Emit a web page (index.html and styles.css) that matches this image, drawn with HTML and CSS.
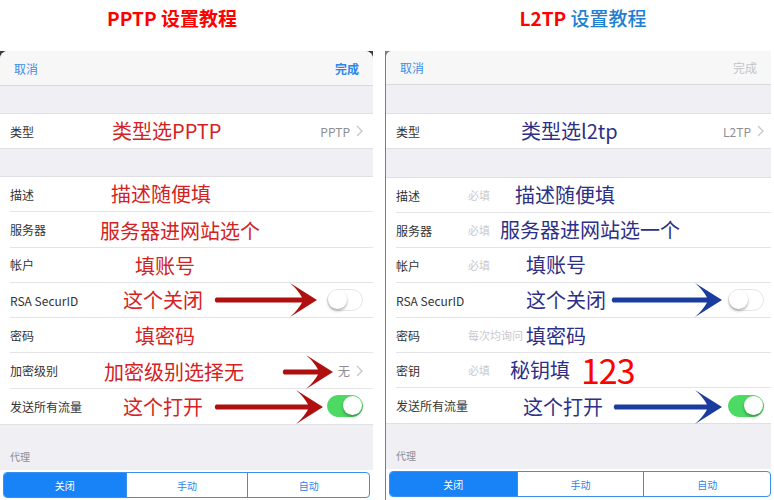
FILE: index.html
```html
<!DOCTYPE html>
<html lang="zh-CN">
<head>
    <meta charset="UTF-8">
    <meta name="viewport" content="width=device-width, initial-scale=1.0">
    <title>PPTP / L2TP 设置教程</title>
    <link rel="stylesheet" href="styles.css">
</head>
<body>

<div class="page">

    <!-- Colonne 1 : PPTP -->
    <div class="column column-pptp">
        <h1 class="title"><span class="red">PPTP 设置教程</span></h1>
        <div class="bezel">
        <div class="screen">
            <div class="nav">
                <span>取消</span>
                <span class="done">完成</span>
            </div>
            <div class="gap"></div>
            <div class="list list-type">
                <div class="row">
                    <span class="label">类型</span>
                    <div class="note note-type"><span>类型选PPTP</span></div>
                    <span class="value">PPTP</span>
                    <svg class="chev" width="7" height="12" viewBox="0 0 7 12"><polyline points="1,1 6,6 1,11" fill="none" stroke="#c7c7cc" stroke-width="1.3"/></svg>
                </div>
            </div>
            <div class="gap gap-low"></div>
            <div class="list list-fields">
                <div class="row">
                    <span class="label">描述</span>
                    <div class="note note-desc"><span>描述随便填</span></div>
                </div>
                <div class="row">
                    <span class="label">服务器</span>
                    <div class="note note-server"><span>服务器进网站选个</span></div>
                </div>
                <div class="row">
                    <span class="label">帐户</span>
                    <div class="note note-account"><span>填账号</span></div>
                </div>
                <div class="row">
                    <span class="label">RSA SecurID</span>
                    <div class="note note-rsa">
                        <span>这个关闭</span>
                        <svg class="arrow arrow-rsa" width="104" height="36" viewBox="0 0 104 36"><path d="M3 15.5 L89 15.5 Q85 8 77 1 L104 18 L77 35 Q85 28 89 20.5 L3 20.5 Q0.5 18 3 15.5 Z"/></svg>
                    </div>
                    <span class="switch"></span>
                </div>
                <div class="row">
                    <span class="label">密码</span>
                    <div class="note note-password"><span>填密码</span></div>
                </div>
                <div class="row">
                    <span class="label">加密级别</span>
                    <div class="note note-level">
                        <span>加密级别选择无</span>
                        <svg class="arrow arrow-level" width="52" height="36" viewBox="0 0 52 36"><path d="M3 15.5 L37 15.5 Q33 8 25 1 L52 18 L25 35 Q33 28 37 20.5 L3 20.5 Q0.5 18 3 15.5 Z"/></svg>
                    </div>
                    <span class="value">无</span>
                    <svg class="chev" width="7" height="12" viewBox="0 0 7 12"><polyline points="1,1 6,6 1,11" fill="none" stroke="#c7c7cc" stroke-width="1.3"/></svg>
                </div>
                <div class="row">
                    <span class="label">发送所有流量</span>
                    <div class="note note-send">
                        <span>这个打开</span>
                        <svg class="arrow arrow-send" width="110" height="36" viewBox="0 0 110 36"><path d="M3 15.5 L95 15.5 Q91 8 83 1 L110 18 L83 35 Q91 28 95 20.5 L3 20.5 Q0.5 18 3 15.5 Z"/></svg>
                    </div>
                    <span class="switch on"></span>
                </div>
            </div>
            <div class="section-foot">代理</div>
            <div class="segment-bar">
                <div class="segment">
                    <span class="seg active">关闭</span>
                    <span class="seg">手动</span>
                    <span class="seg">自动</span>
                </div>
            </div>
        </div>
        </div>
    </div>

    <!-- Colonne 2 : L2TP -->
    <div class="column column-l2tp">
        <h1 class="title"><span class="red">L2TP</span>&nbsp;<span class="blue">设置教程</span></h1>
        <div class="bezel">
        <div class="screen">
            <div class="nav">
                <span>取消</span>
                <span class="done">完成</span>
            </div>
            <div class="gap"></div>
            <div class="list list-type">
                <div class="row">
                    <span class="label">类型</span>
                    <div class="note note-type"><span>类型选l2tp</span></div>
                    <span class="value">L2TP</span>
                    <svg class="chev" width="7" height="12" viewBox="0 0 7 12"><polyline points="1,1 6,6 1,11" fill="none" stroke="#c7c7cc" stroke-width="1.3"/></svg>
                </div>
            </div>
            <div class="gap gap-low"></div>
            <div class="list list-fields">
                <div class="row">
                    <span class="label">描述</span><span class="hint">必填</span>
                    <div class="note note-desc"><span>描述随便填</span></div>
                </div>
                <div class="row">
                    <span class="label">服务器</span><span class="hint">必填</span>
                    <div class="note note-server"><span>服务器进网站选一个</span></div>
                </div>
                <div class="row">
                    <span class="label">帐户</span><span class="hint">必填</span>
                    <div class="note note-account"><span>填账号</span></div>
                </div>
                <div class="row">
                    <span class="label">RSA SecurID</span>
                    <div class="note note-rsa">
                        <span>这个关闭</span>
                        <svg class="arrow arrow-rsa" width="112" height="36" viewBox="0 0 112 36"><path d="M3 15.5 L97 15.5 Q93 8 85 1 L112 18 L85 35 Q93 28 97 20.5 L3 20.5 Q0.5 18 3 15.5 Z"/></svg>
                    </div>
                    <span class="switch"></span>
                </div>
                <div class="row">
                    <span class="label">密码</span><span class="hint">每次均询问</span>
                    <div class="note note-password"><span>填密码</span></div>
                </div>
                <div class="row">
                    <span class="label">密钥</span><span class="hint">必填</span>
                    <div class="note note-key"><span>秘钥填</span><span class="big">123</span></div>
                </div>
                <div class="row">
                    <span class="label">发送所有流量</span>
                    <div class="note note-send">
                        <span>这个打开</span>
                        <svg class="arrow arrow-send" width="110" height="36" viewBox="0 0 110 36"><path d="M3 15.5 L95 15.5 Q91 8 83 1 L110 18 L83 35 Q91 28 95 20.5 L3 20.5 Q0.5 18 3 15.5 Z"/></svg>
                    </div>
                    <span class="switch on"></span>
                </div>
            </div>
            <div class="section-foot">代理</div>
            <div class="segment-bar">
                <div class="segment">
                    <span class="seg active">关闭</span>
                    <span class="seg">手动</span>
                    <span class="seg">自动</span>
                </div>
            </div>
        </div>
        </div>
    </div>

</div>

</body>
</html>
```

FILE: styles.css
```css
body {
    margin: 0;
    background-color: #fff;
    font-family: "Noto Sans CJK SC", "Noto Sans", sans-serif;
}
.page {
    display: flex;
    gap: 12px;
    width: 771px;
    height: 500px;
    overflow: hidden;
}
.column {
    display: flex;
    flex-direction: column;
}
.column-pptp {
    width: 373px;
}
.column-l2tp {
    width: 386px;
}

/* titres */
.title {
    flex-shrink: 0;
    margin: 0;
    height: 51px;
    line-height: 36px;
    text-align: center;
    font-size: 19px;
    font-weight: 700;
}
.column-pptp .title {
    padding-right: 29px;
}
.column-l2tp .title {
    padding-left: 10px;
}
.red {
    color: #ff0000;
}
.blue {
    color: #1f7fd4;
    font-weight: 500;
}

/* capture iOS */
.bezel {
    flex: 1;
    min-height: 0;
    background-color: #3c3c3c;
}
.column-l2tp .bezel {
    padding-left: 1px;
    background-color: #7d7d7d;
}
.screen {
    height: 100%;
    background-color: #efeff4;
    border-radius: 8px 8px 0 0;
    overflow: hidden;
    display: flex;
    flex-direction: column;
}
.column-l2tp .screen {
    border-radius: 6px 0 0 0;
}
.nav {
    flex-shrink: 0;
    display: flex;
    justify-content: space-between;
    align-items: center;
    height: 35px;
    padding: 0 14px;
    background-color: #f7f7f8;
    border-bottom: 1px solid #d9d9dc;
    font-size: 12px;
    color: #3a8ee6;
    box-sizing: border-box;
}
.column-l2tp .nav {
    height: 34px;
}
.column-pptp .nav .done {
    font-weight: 700;
    color: #2f86e6;
}
.column-l2tp .nav .done {
    color: #c4c4c6;
}
.gap {
    flex-shrink: 0;
    height: 27px;
    border-bottom: 1px solid #e0e0e4;
}
.column-l2tp .gap {
    height: 28px;
}
.gap-low {
    height: 27px;
    border-top: 1px solid #e0e0e4;
}
.column-l2tp .gap-low {
    height: 28px;
}
.list {
    flex-shrink: 0;
    background-color: #fff;
    padding-left: 10px;
}
.row {
    position: relative;
    display: flex;
    align-items: center;
    height: 35px;
    padding-right: 10px;
    border-bottom: 1px solid #e4e4e6;
    font-size: 12px;
    color: #333;
    box-sizing: border-box;
}
.list-type .row {
    height: 34px;
}
.column-pptp .list-fields .row {
    height: 35.3px;
}
.column-l2tp .row {
    padding-right: 7px;
}
.list .row:last-child {
    border-bottom: 0;
}
.label {
    flex-shrink: 0;
}
.column-l2tp .label {
    width: 72px;
}
.hint {
    font-size: 11px;
    color: #c9c9cd;
}
.value {
    margin-left: auto;
    color: #8e8e93;
}
.chev {
    margin-left: 6px;
}

/* interrupteurs */
.switch {
    margin-left: auto;
    display: flex;
    justify-content: flex-start;
    width: 36px;
    height: 22px;
    border: 1.5px solid #e6e6e8;
    border-radius: 11px;
    background-color: #fff;
    box-sizing: border-box;
}
.switch::after {
    content: "";
    width: 19px;
    height: 19px;
    border-radius: 50%;
    background-color: #fff;
    box-shadow: 0 2px 3px rgba(0, 0, 0, 0.3);
}
.switch.on {
    justify-content: flex-end;
    background-color: #4cd964;
    border-color: #4cd964;
}

/* annotations par-dessus la capture */
.note {
    position: absolute;
    top: 0;
    bottom: 0;
    display: flex;
    align-items: center;
    font-size: 20px;
    line-height: 1;
    color: #d42222;
    white-space: nowrap;
}
.column-l2tp .note {
    color: #2d3086;
}
.arrow {
    overflow: visible;
    fill: #b00f0f;
}
.column-l2tp .arrow {
    fill: #1b3c9f;
}
.big {
    margin-left: 11px;
    font-size: 34px;
    color: #ff0000;
    letter-spacing: -1px;
}

.column-pptp .note-type { left: 102px; }
.column-pptp .note-desc { left: 101px; }
.column-pptp .note-server { left: 90px; top: 3px; }
.column-pptp .note-account { left: 125px; top: 3px; }
.column-pptp .note-rsa { left: 113px; }
.column-pptp .note-password { left: 125px; top: 2px; }
.column-pptp .note-level { left: 94px; top: 2px; }
.column-pptp .note-send { left: 113px; top: 2px; }
.column-pptp .arrow-rsa { margin-left: 10px; }
.column-pptp .arrow-level { margin-left: 37px; }
.column-pptp .arrow-send { margin-left: 10px; }

.column-l2tp .note-type { left: 125px; }
.column-l2tp .note-desc { left: 119px; }
.column-l2tp .note-server { left: 104px; }
.column-l2tp .note-account { left: 130px; }
.column-l2tp .note-rsa { left: 130px; }
.column-l2tp .note-password { left: 130px; top: 2px; }
.column-l2tp .note-key { left: 114px; }
.column-l2tp .note-send { left: 127px; top: 2px; }
.column-l2tp .arrow-rsa { margin-left: 4px; }
.column-l2tp .arrow-send { margin-left: 9px; }

/* pied : proxy */
.section-foot {
    flex-shrink: 0;
    height: 46px;
    display: flex;
    align-items: flex-end;
    padding: 0 10px 6px;
    border-top: 1px solid #e0e0e4;
    font-size: 10px;
    color: #8e8e93;
    box-sizing: border-box;
}
.segment-bar {
    flex: 1;
    background-color: #fff;
    padding: 2px 3px 0;
}
.column-l2tp .segment-bar {
    padding-right: 0;
}
.segment {
    display: grid;
    grid-template-columns: repeat(3, 1fr);
    height: 26px;
    border: 1px solid #3b8ff0;
    border-radius: 4px;
    overflow: hidden;
    box-sizing: border-box;
}
.seg {
    display: flex;
    align-items: center;
    justify-content: center;
    font-size: 10px;
    color: #2f86ea;
}
.seg + .seg {
    border-left: 1px solid #3b8ff0;
}
.seg.active {
    background-color: #1883f7;
    color: #fff;
}
```
